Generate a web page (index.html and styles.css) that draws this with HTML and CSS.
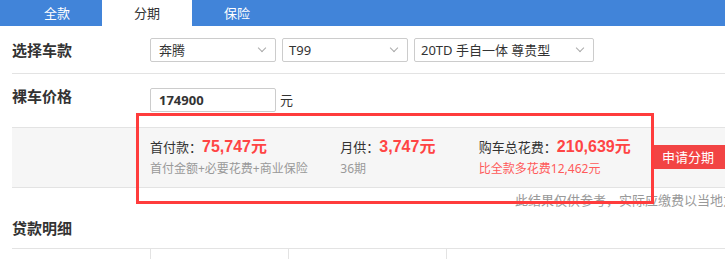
FILE: index.html
```html
<!DOCTYPE html>
<html lang="zh-CN">
<head>
<meta charset="UTF-8">
<title>分期计算</title>
<link rel="stylesheet" href="styles.css">
</head>
<body>

<div class="page">
  <div class="tabs">
    <div class="tab">全款</div>
    <div class="tab active">分期</div>
    <div class="tab">保险</div>
  </div>

  <div class="row row-car">
    <div class="label">选择车款</div>
    <div class="select s1">奔腾<span class="arrow"></span></div>
    <div class="select s2">T99<span class="arrow"></span></div>
    <div class="select s3">20TD 手自一体 尊贵型<span class="arrow"></span></div>
  </div>

  <div class="row row-price">
    <div class="label">裸车价格</div>
    <div class="price-input">174900</div>
    <span class="unit">元</span>
  </div>

  <div class="result">
    <div class="col c1">
      <p class="main">首付款：<b>75,747元</b></p>
      <p class="sub">首付金额+必要花费+商业保险</p>
    </div>
    <div class="col c2">
      <p class="main">月供：<b>3,747元</b></p>
      <p class="sub">36期</p>
    </div>
    <div class="col c3">
      <p class="main">购车总花费：<b>210,639元</b></p>
      <p class="sub red">比全款多花费12,462元</p>
    </div>
    <div class="apply">申请分期</div>
  </div>

  <div class="note">此结果仅供参考，实际应缴费以当地为准</div>

  <h3 class="detail-title">贷款明细</h3>
  <div class="detail-table">
    <div class="cell w1"></div>
    <div class="cell w2"></div>
    <div class="cell w3"></div>
    <div class="cell w4"></div>
  </div>

  <!-- red marking -->
  <div class="mark"></div>
</div>

</body>
</html>
```

FILE: styles.css
```css
body {
  margin: 0;
  font-family: "Noto Sans", "Noto Sans CJK SC", sans-serif;
  color: #333;
  background: #fff;
  overflow: hidden;
}

.page {
  position: relative;
  width: 725px;
  height: 259px;
  overflow: hidden;
}

.tabs {
  display: flex;
  height: 26px;
  padding-left: 12px;
  background: #4184d9;
}

.tab {
  width: 90px;
  line-height: 26px;
  text-align: center;
  font-size: 13px;
  color: #fff;
}

.tab.active {
  background: #fff;
  color: #333;
}

.row {
  display: flex;
  align-items: center;
  margin-left: 12px;
}

.label {
  width: 138px;
  font-size: 15px;
  font-weight: bold;
  color: #333;
}

.row-car {
  height: 47px;
  border-bottom: 1px solid #e3e3e3;
}

.select {
  position: relative;
  box-sizing: border-box;
  height: 24px;
  line-height: 22px;
  padding-left: 8px;
  margin-right: 6px;
  border: 1px solid #ccc;
  border-radius: 2px;
  font-size: 13px;
}

.s1 { width: 126px; }
.s2 { width: 126px; padding-left: 6px; }
.s3 { width: 180px; padding-left: 6px; }

.arrow {
  position: absolute;
  right: 10px;
  top: 6px;
  width: 5px;
  height: 5px;
  border-right: 1px solid #aaa;
  border-bottom: 1px solid #aaa;
  transform: rotate(45deg);
}

.row-price {
  height: 53px;
  align-items: flex-start;
}

.row-price .label {
  margin-top: 11px;
}

.price-input {
  box-sizing: border-box;
  width: 126px;
  height: 24px;
  margin-top: 14px;
  padding-left: 8px;
  border: 1px solid #ccc;
  border-radius: 2px;
  line-height: 22px;
  font-size: 13px;
  font-weight: bold;
}

.unit {
  margin: 16px 0 0 4px;
  font-size: 13px;
}

.result {
  display: flex;
  align-items: center;
  height: 59px;
  margin-left: 12px;
  padding-left: 138px;
  background: #f6f6f6;
  border-top: 1px solid #e3e3e3;
  border-bottom: 1px solid #e3e3e3;
}

.col p {
  margin: 0;
  white-space: nowrap;
}

.col .main {
  font-size: 13px;
  line-height: 22px;
}

.col .main b {
  font-family: "Liberation Sans", "Noto Sans CJK SC", sans-serif;
  font-size: 16px;
  color: #ff4444;
}

.col .sub {
  font-size: 12px;
  line-height: 22px;
  color: #999;
}

.col .sub.red {
  color: #ff5a5a;
}

.c1 { width: 191px; }
.c2 { width: 139px; }
.c3 { width: 171px; }

.apply {
  width: 74px;
  height: 24px;
  margin-top: -2px;
  margin-left: 2px;
  line-height: 24px;
  text-align: center;
  background: #f24444;
  color: #fff;
  font-size: 13px;
}

.note {
  margin: 2px 0 0 515px;
  font-size: 13px;
  line-height: 20px;
  color: #999;
  white-space: nowrap;
}

.detail-title {
  margin: 5px 0 0 12px;
  font-size: 15px;
  line-height: 26px;
  font-weight: bold;
  color: #333;
}

.detail-table {
  display: flex;
  height: 20px;
  margin: 7px 0 0 12px;
  border-top: 1px solid #e3e3e3;
}

.cell {
  border-right: 1px solid #e3e3e3;
}

.w1 { width: 138px; }
.w2 { width: 137px; }
.w3 { width: 157px; }
.w4 { width: 200px; border-right: none; }

.mark {
  position: absolute;
  left: 136px;
  top: 113px;
  width: 512px;
  height: 85px;
  border: 3px solid #ff3c3c;
}
```
